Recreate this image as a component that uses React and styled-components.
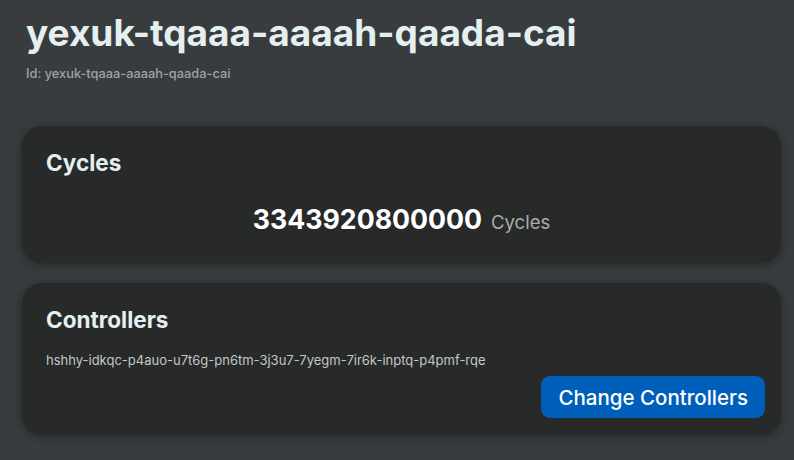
import React from 'react';
import styled, { createGlobalStyle } from 'styled-components';

const GlobalStyle = createGlobalStyle`
  html, body {
    margin: 0;
    padding: 0;
    background: #393c3e;
    font-family: Inter, "Noto Sans", sans-serif;
  }
`;

const Page = styled.div`
  width: 794px;
  height: 460px;
  overflow: hidden;
  box-sizing: border-box;
  padding: 0 13px 0 22px;
`;

const Header = styled.header`
  padding: 10px 0 0 4px;
  margin-bottom: 44px;
`;

const Title = styled.h1`
  margin: 0;
  font-size: 37px;
  line-height: 46px;
  font-weight: 700;
  color: #e4f0f0;
  letter-spacing: 0;
`;

const SubId = styled.div`
  margin-top: 10px;
  font-size: 12.8px;
  line-height: 16px;
  font-weight: 500;
  color: #9ea3a4;
`;

const Card = styled.section`
  box-sizing: border-box;
  height: ${(p) => p.h}px;
  margin-bottom: 20px;
  padding: 22px 24px 17px 24px;
  background: #282a2a;
  border-radius: 20px;
  box-shadow: 0 2px 10px rgba(0, 0, 0, 0.35);
  display: flex;
  flex-direction: column;
`;

const CardTitle = styled.h2`
  margin: 0;
  font-size: 22.5px;
  line-height: 30px;
  font-weight: 700;
  color: #e4f0f0;
`;

const Amount = styled.div`
  margin-top: 25px;
  display: flex;
  justify-content: center;
  align-items: baseline;
  gap: 9px;
`;

const Number = styled.span`
  font-size: 26.7px;
  font-weight: 700;
  color: #ffffff;
`;

const Unit = styled.span`
  font-size: 18.5px;
  color: #a9aeaf;
`;

const Principal = styled.div`
  margin-top: 17px;
  font-size: 13px;
  line-height: 16px;
  color: #c3c7c7;
`;

const Actions = styled.div`
  margin-top: auto;
  display: flex;
  justify-content: flex-end;
  margin-right: -8px;
`;

const Button = styled.button`
  height: 42px;
  padding: 0 17px;
  border: none;
  border-radius: 9px;
  background: #005fba;
  color: #ffffff;
  font-family: inherit;
  font-size: 20.5px;
  font-weight: 500;
  cursor: pointer;
`;

export default function App() {
  return (
    <Page>
      <GlobalStyle />
      <Header>
        <Title>yexuk-tqaaa-aaaah-qaada-cai</Title>
        <SubId>Id: yexuk-tqaaa-aaaah-qaada-cai</SubId>
      </Header>
      <Card h={137}>
        <CardTitle>Cycles</CardTitle>
        <Amount>
          <Number>3343920800000</Number>
          <Unit>Cycles</Unit>
        </Amount>
      </Card>
      <Card h={152}>
        <CardTitle>Controllers</CardTitle>
        <Principal>hshhy-idkqc-p4auo-u7t6g-pn6tm-3j3u7-7yegm-7ir6k-inptq-p4pmf-rqe</Principal>
        <Actions>
          <Button>Change Controllers</Button>
        </Actions>
      </Card>
    </Page>
  );
}
